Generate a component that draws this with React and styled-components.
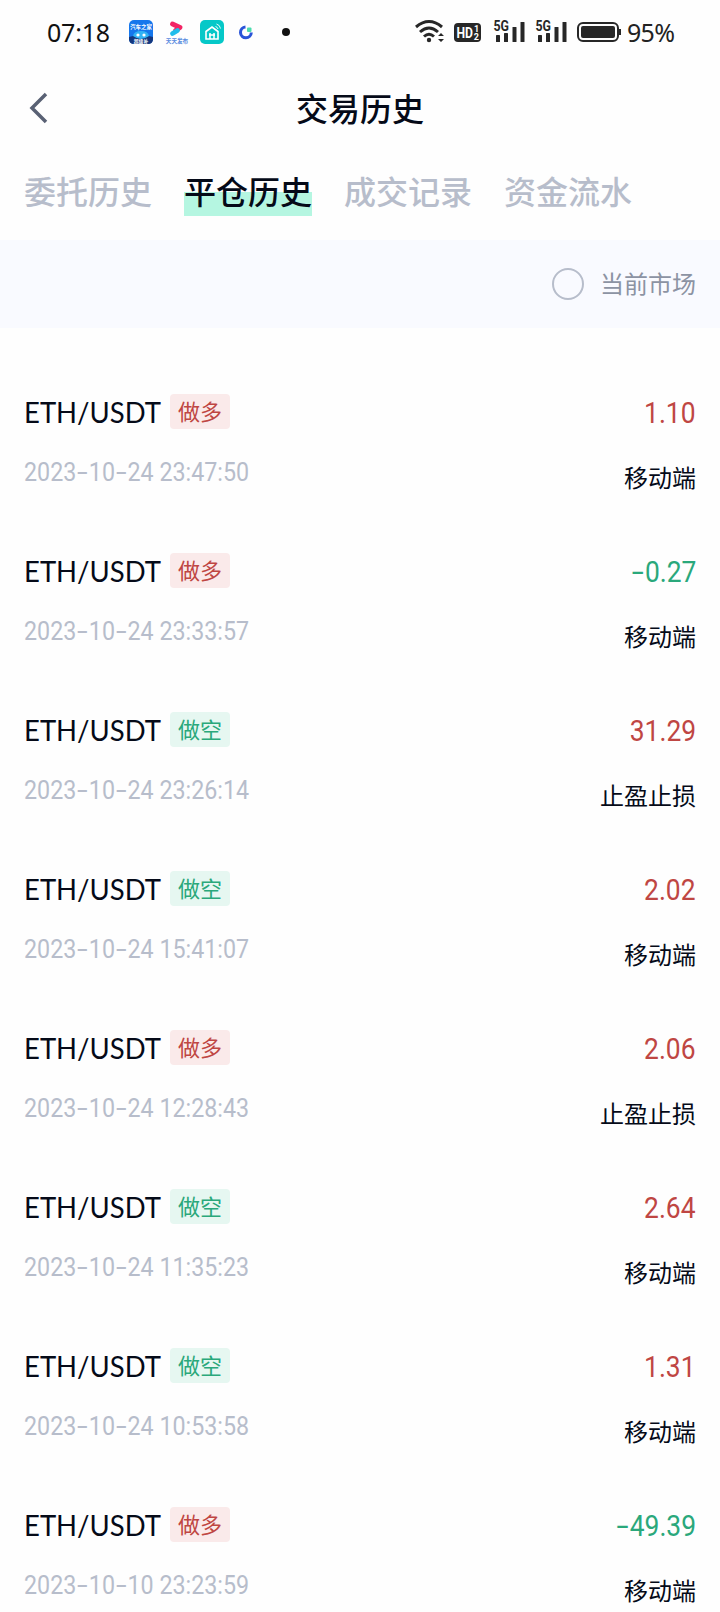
import React from 'react';
import styled, { createGlobalStyle } from 'styled-components';

const Global = createGlobalStyle`
  *{box-sizing:border-box;}
  body{margin:0;background:#fff;}
`;
const cjk = `"Noto Sans CJK SC", sans-serif`;

const Page = styled.div`
  width:720px;height:1612px;overflow:hidden;background:#fefefe;color:#050a18;
  font-family:Roboto, ${cjk};display:flex;flex-direction:column;
`;
const StatusBar = styled.div`
  height:64px;flex:none;display:flex;align-items:center;justify-content:space-between;
  padding:0 45px 0 47px;
`;
const Clock = styled.span`
  width:82px;font:400 25px/30px "Noto Sans", sans-serif;color:#111;white-space:nowrap;letter-spacing:-.2px;
`;
const Group = styled.div`display:flex;align-items:center;`;
const Battery = styled.span`
  font:400 25px/30px "Noto Sans", sans-serif;color:#222;margin-left:6px;letter-spacing:-.7px;width:48px;white-space:nowrap;
`;
const NavBar = styled.header`
  height:88px;flex:none;display:grid;grid-template-columns:80px 1fr 80px;align-items:center;
`;
const Back = styled.button`
  border:0;background:none;padding:0 0 0 27px;height:32px;justify-self:start;
`;
const Title = styled.h1`
  margin:0;padding-bottom:3px;text-align:center;font:500 32px/46px ${cjk};
`;
const Tabs = styled.nav`
  height:88px;flex:none;display:flex;gap:32px;padding:15px 24px 0;
`;
const Tab = styled.span`
  height:49px;font:500 32px/47px ${cjk};white-space:nowrap;
  color:${p => p.$active ? '#050a18' : '#b7bdcb'};
  background:${p => p.$active ? 'linear-gradient(#b5f6e1,#b5f6e1) 0 100%/100% 24px no-repeat' : 'none'};
`;
const Filter = styled.label`
  height:88px;flex:none;background:#f9faff;display:flex;align-items:center;justify-content:flex-end;
  gap:16px;padding-right:24px;font:400 24px/36px ${cjk};color:#8c93a3;
`;
const FilterText = styled.span`padding-bottom:2px;`;
const Radio = styled.i`
  width:32px;height:32px;border:2px solid #b7bdcb;border-radius:50%;
`;
const List = styled.main`padding:66px 24px 0;`;
const Row = styled.article`
  height:159px;display:flex;justify-content:space-between;
`;
const Left = styled.div`display:flex;flex-direction:column;gap:25px;`;
const Right = styled.div`display:flex;flex-direction:column;align-items:flex-end;gap:28px;`;
const Head = styled.div`display:flex;align-items:center;height:35px;`;
const Pair = styled.span`
  width:146px;font:400 29px/37px Lato, sans-serif;white-space:nowrap;
  transform:scaleX(.948);transform-origin:left;
`;
const Tag = styled.span`
  width:60px;height:35px;border-radius:4px;text-align:center;font:400 22px/32px ${cjk};
  color:${p => p.$long ? '#bf4643' : '#2aa87b'};
  background:${p => p.$long ? '#faeaea' : '#e6f7f1'};
`;
const Time = styled.time`
  height:38px;font:400 25px/38px Roboto, sans-serif;color:#b7bdcb;white-space:nowrap;
  transform:scaleX(.93);transform-origin:left;
`;
const Amount = styled.span`
  height:37px;font:400 29.5px/38px Roboto, sans-serif;white-space:nowrap;
  color:${p => p.$down ? '#2aa87b' : '#bf4643'};
  transform:scaleX(.895);transform-origin:right;
`;
const Dash = styled.span`
  display:inline-block;width:.54em;text-align:center;transform:scaleX(1.65);
`;
const Source = styled.span`height:36px;font:400 24px/36px ${cjk};`;

const Digits = ({ text }) => text.split(/(-)/).map((s, i) => s === '-' ? <Dash key={i}>-</Dash> : s);

const rows = [
  [1, '2023-10-24 23:47:50', '1.10', '移动端'],
  [1, '2023-10-24 23:33:57', '-0.27', '移动端'],
  [0, '2023-10-24 23:26:14', '31.29', '止盈止损'],
  [0, '2023-10-24 15:41:07', '2.02', '移动端'],
  [1, '2023-10-24 12:28:43', '2.06', '止盈止损'],
  [0, '2023-10-24 11:35:23', '2.64', '移动端'],
  [0, '2023-10-24 10:53:58', '1.31', '移动端'],
  [1, '2023-10-10 23:23:59', '-49.39', '移动端'],
];

const AppIcons = () => (
  <svg width="164" height="32" viewBox="0 0 164 32">
    <rect x="0" y="4" width="24" height="24" rx="5" fill="#1677ec" />
    <path d="M0 21Q12 17 24 21V23Q24 28 19 28H5Q0 28 0 23Z" fill="#14377e" />
    <path d="M4 20Q5 15 12 15Q19 15 20 20Q16 23 12 23Q8 23 4 20Z" fill="#32b3f4" />
    <circle cx="9" cy="19" r="1.6" fill="#fff" /><circle cx="15" cy="19" r="1.6" fill="#fff" />
    <text x="12" y="13" textAnchor="middle" fontSize="5.4" fontWeight="700" fill="#fff" fontFamily={cjk}>汽车之家</text>
    <text x="12" y="27" textAnchor="middle" fontSize="4.8" fontWeight="700" fill="#fff" fontFamily={cjk}>超级补</text>
    <path d="M43.5 8L51 11.5L46.5 14.5" fill="none" stroke="#f32465" strokeWidth="4.8" strokeLinecap="round" strokeLinejoin="round" />
    <path d="M43.5 17.5L48.5 14.5" stroke="#20bdeb" strokeWidth="4.8" strokeLinecap="round" />
    <text x="48" y="26.5" textAnchor="middle" fontSize="5.6" fontWeight="700" fill="#5a8be0" fontFamily={cjk}>天天发布</text>
    <rect x="71" y="4" width="24" height="24" rx="5" fill="#05c8c8" />
    <path d="M77 15.5L83 11L89 15.5V23H77Z" fill="none" stroke="#fff" strokeWidth="1.6" />
    <path d="M81 23V17M85 23V17M80 19H86" stroke="#fff" strokeWidth="1.5" />
    <path d="M86.5 10.5Q88.5 11 89 13M87.5 8Q91 9 91.5 12.5" fill="none" stroke="#fff" strokeWidth=".9" />
    <path d="M116.5 11A5.4 5.4 0 1 0 122.3 16.5" fill="none" stroke="#2954d8" strokeWidth="3" />
    <rect x="118" y="11.5" width="4.5" height="4.5" rx="1" fill="#4bdcae" />
    <circle cx="157" cy="16" r="4" fill="#111" />
  </svg>
);

const SystemIcons = () => (
  <svg width="206" height="32" viewBox="0 0 206 32" fill="none" stroke="#272727">
    <path d="M1 11Q14 0 27 11M5 16Q14 8 23 16M9 20.5Q14 16 19 20.5" strokeWidth="3" />
    <circle cx="14" cy="24" r="2.2" fill="#272727" stroke="none" />
    <path d="M23 20L26 17L29 20ZM23 23L26 26L29 23Z" fill="#272727" stroke="none" />
    <rect x="39" y="7" width="27" height="19" rx="4" fill="#272727" stroke="none" />
    <g fontFamily="Roboto, sans-serif" fontWeight="700" fill="#fff" stroke="none">
      <text x="41.5" y="22" fontSize="15" textLength="16.5" lengthAdjust="spacingAndGlyphs">HD</text>
      <text x="59" y="16" fontSize="9">1</text>
      <text x="58.8" y="24.2" fontSize="9">2</text>
    </g>
    {[78, 120].map(x => (
      <g key={x} fill="#272727" stroke="none">
        <text x={x + .5} y="15" fontFamily="Roboto, sans-serif" fontWeight="700" fontSize="14" textLength="15.5" lengthAdjust="spacingAndGlyphs">5G</text>
        <rect x={x + 3} y="19" width="4" height="7" rx=".6" /><rect x={x + 11} y="17" width="4" height="9" rx=".6" />
        <rect x={x + 19.5} y="11" width="4" height="15" rx=".6" /><rect x={x + 27.5} y="6" width="4" height="20" rx=".6" />
      </g>
    ))}
    <rect x="163" y="7" width="40" height="18" rx="5" strokeWidth="2" />
    <rect x="166" y="10" width="34" height="12" rx="2" fill="#272727" stroke="none" />
    <path d="M205 13V19" strokeWidth="2" />
  </svg>
);

export default function App() {
  return (
    <Page>
      <Global />
      <StatusBar>
        <Group><Clock>07:18</Clock><AppIcons /></Group>
        <Group><SystemIcons /><Battery>95%</Battery></Group>
      </StatusBar>
      <NavBar>
        <Back aria-label="返回">
          <svg width="22" height="32" viewBox="0 0 22 32" fill="none" stroke="#596174" strokeWidth="3.5"><path d="M19 2L5 16L19 30" /></svg>
        </Back>
        <Title>交易历史</Title>
      </NavBar>
      <Tabs>
        {['委托历史', '平仓历史', '成交记录', '资金流水'].map((t, i) => <Tab key={t} $active={i === 1}>{t}</Tab>)}
      </Tabs>
      <Filter><Radio /><FilterText>当前市场</FilterText></Filter>
      <List>
        {rows.map(([long, time, amount, source]) => (
          <Row key={time}>
            <Left>
              <Head><Pair>ETH/USDT</Pair><Tag $long={!!long}>{long ? '做多' : '做空'}</Tag></Head>
              <Time><Digits text={time} /></Time>
            </Left>
            <Right>
              <Amount $down={amount[0] === '-'}><Digits text={amount} /></Amount>
              <Source>{source}</Source>
            </Right>
          </Row>
        ))}
      </List>
    </Page>
  );
}
